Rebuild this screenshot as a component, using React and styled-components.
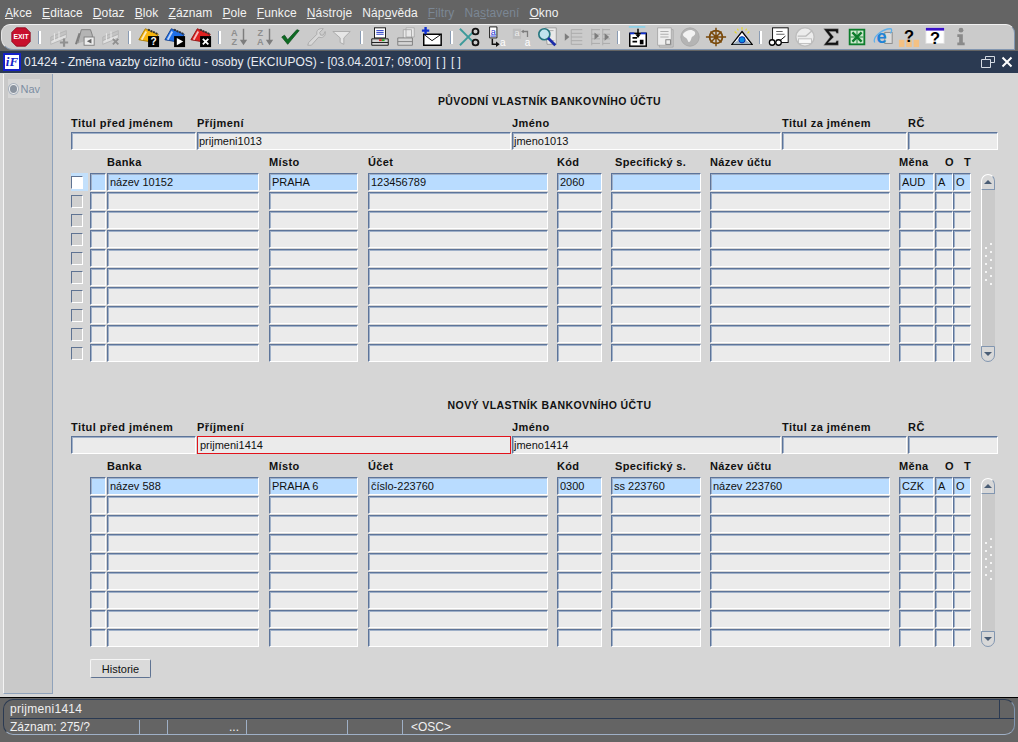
import React from "react";
import styled, { createGlobalStyle } from "styled-components";

const GlobalStyle = createGlobalStyle`
  html, body { margin: 0; padding: 0; height: 100%; overflow: hidden; background: #646464; }
  body { font-family: "Liberation Sans", Arial, sans-serif; font-size: 11px; color: #111; }
  * { box-sizing: border-box; }
`;

const GREY = "#a9a9a9";
const GREY_D = "#7d7d7d";

const Svg = ({ children }) => (
  <svg width="22" height="22" viewBox="0 0 24 24">
    {children}
  </svg>
);

const Exit = () => (
  <Svg>
    <polygon points="7,2 17,2 22,7 22,17 17,22 7,22 2,17 2,7" fill="#c8102e" stroke="#8d0b20" />
    <text x="12" y="14.5" fontSize="7.5" fontWeight="700" fill="#fff" textAnchor="middle" fontFamily="Liberation Sans">EXIT</text>
  </Svg>
);

const RowIcon = ({ mark }) => (
  <Svg>
    <path d="M3 12 L20 5 L20 9 L3 16 Z" fill="#c4c4c4" stroke="#b4b4b4" />
    <path d="M3 16 L20 9 L20 13 L3 20 Z" fill="#e0e0e0" stroke="#b4b4b4" />
    <path d="M7 8v8M12 6v8" stroke="#eee" />
    {mark === "plus" ? (
      <path d="M13 18h9M17.5 13.5v9" stroke="#909090" strokeWidth="2.4" />
    ) : (
      <path d="M14 14l6 6M20 14l-6 6" stroke="#909090" strokeWidth="2" />
    )}
  </Svg>
);

const FolderGrey = () => (
  <Svg>
    <path d="M4 19 L8 4 L18 4 L20 10 L20 14" fill="#b4b4b4" stroke={GREY_D} />
    <path d="M2 20 L6 8" stroke={GREY_D} strokeWidth="2" />
    <rect x="11" y="12" width="11" height="9" fill="#ededed" stroke={GREY_D} />
    <path d="M19 14 L14 16.5 L19 19 Z" fill="#666" />
  </Svg>
);

const CardIcon = ({ color, dark, children }) => (
  <Svg>
    <path d="M1 15 L8 3 L22 9 L18 18 Z" fill={color} stroke={dark} />
    <path d="M4 15 L9 6" stroke="#fff" strokeOpacity=".7" strokeWidth="2" />
    <path d="M11 4 L22 9" stroke="#333" strokeWidth="2" strokeDasharray="2 1" />
    <rect x="11" y="11" width="12" height="12" fill="#000" />
    {children}
  </Svg>
);

const SortIcon = ({ top, bottom }) => (
  <Svg>
    <text x="8" y="11" fontSize="10" fill="#8f8f8f" fontWeight="700" textAnchor="middle" fontFamily="Liberation Sans">{top}</text>
    <text x="8" y="21" fontSize="10" fill="#8f8f8f" fontWeight="700" textAnchor="middle" fontFamily="Liberation Sans">{bottom}</text>
    <path d="M18 3v14" stroke="#7d7d7d" strokeWidth="1.6" />
    <path d="M14 15h8l-4 6z" fill="#7d7d7d" />
  </Svg>
);

const Check = () => (
  <Svg>
    <path d="M3 12 L9.5 20 L22 5 L19.5 4 L9.5 15 L6 10 Z" fill="#0c6b22" stroke="#0a4c18" strokeWidth=".8" />
  </Svg>
);

const Wrench = () => (
  <Svg>
    <path d="M3 21 L4 18 L13 9 C12 5 15 2 20 3 L16 7 L17 10 L20 10 L22 6 C23 11 19 14 15 12 L7 21 Z" fill="#d8d8d8" stroke={GREY} />
  </Svg>
);

const Funnel = () => (
  <Svg>
    <path d="M2 6 H21 L14 13 V20 L10 18 V13 Z" fill="#e6e6e6" stroke={GREY} />
  </Svg>
);

const Printer = () => (
  <Svg>
    <rect x="6" y="2" width="12" height="11" fill="#fff" stroke="#111" />
    <path d="M8 5h8M8 7h8M8 9h8" stroke="#1b2fbf" />
    <path d="M3 14 H21 V21 H3 Z" fill="#d5d5d5" stroke="#111" />
    <path d="M3 18 H21" stroke="#111" />
    <path d="M11 15.5h3" stroke="#d22" strokeWidth="2" />
    <path d="M14 15.5h3" stroke="#2a2" strokeWidth="2" />
  </Svg>
);

const PrinterGrey = () => (
  <Svg>
    <path d="M12 2h9v10h-9z M9 4h9v10H9z" fill="#e8e8e8" stroke={GREY} />
    <path d="M3 13 H19 V21 H3 Z" fill="#d5d5d5" stroke={GREY_D} />
    <path d="M3 17 H19" stroke={GREY_D} />
  </Svg>
);

const Mail = () => (
  <Svg>
    <rect x="3" y="9" width="19" height="12" fill="#fff" stroke="#000" strokeWidth="1.6" />
    <path d="M3 9 L12 16 L22 9" fill="none" stroke="#000" />
    <path d="M1 5h8M5 1v8" stroke="#1030d0" strokeWidth="2.6" />
  </Svg>
);

const Scissors = () => (
  <Svg>
    <path d="M1 3 L15 17" stroke="#3c9a9a" strokeWidth="2" />
    <path d="M1 21 L15 7" stroke="#3c9a9a" strokeWidth="2" />
    <circle cx="18" cy="6" r="3.2" fill="none" stroke="#111" strokeWidth="2" />
    <circle cx="18" cy="18" r="3.2" fill="none" stroke="#111" strokeWidth="2" />
  </Svg>
);

const CopyIcon = () => (
  <Svg>
    <path d="M5 1h8v12H5z" fill="#fff" stroke="#111" />
    <text x="9" y="10" fontSize="10" fill="#1a2fd0" textAnchor="middle" fontFamily="Liberation Sans">a</text>
    <path d="M6 11h6" stroke="#1a2fd0" />
    <path d="M8 14v6h5" fill="none" stroke="#111" strokeWidth="1.6" />
    <path d="M12 17l4 3-4 3z" fill="#111" />
    <text x="19.5" y="22" fontSize="11" fill="#fff" textAnchor="middle" fontFamily="Liberation Sans">a</text>
  </Svg>
);

const PasteGrey = () => (
  <Svg>
    <rect x="2" y="3" width="9" height="11" fill="#bdbdbd" />
    <text x="6.5" y="11" fontSize="10" fill="#eee" textAnchor="middle" fontFamily="Liberation Sans">a</text>
    <path d="M12 6h6v6" fill="none" stroke={GREY_D} strokeWidth="1.4" />
    <path d="M11 6l3-2v4z" fill={GREY_D} />
    <text x="18" y="22" fontSize="11" fill="#fff" textAnchor="middle" fontFamily="Liberation Sans">a</text>
  </Svg>
);

const FindIcon = () => (
  <Svg>
    <path d="M9 2 H21 V20 H11 Z" fill="#e9e9e9" stroke="#999" />
    <path d="M12 5h6M14 16h5" stroke="#aaa" />
    <circle cx="8" cy="9" r="6" fill="#bfe3ee" stroke="#26767f" strokeWidth="1.8" />
    <path d="M12 13 L20 21" stroke="#1b2ca8" strokeWidth="3" />
  </Svg>
);

const ListIn = () => (
  <Svg>
    <path d="M9 4v16M9 4h12M9 8h12M9 12h12M9 16h12M9 20h12" stroke={GREY} fill="none" />
    <path d="M2 8l5 4-5 4z" fill={GREY_D} />
  </Svg>
);

const ListCols = () => (
  <Svg>
    <path d="M3 3v18M15 3v18M3 4h9M3 9h9M3 14h9M3 19h9M15 4h8M15 9h8M15 14h8M15 19h8" stroke={GREY} fill="none" />
    <path d="M6 7l5 4-5 4zM17 8l5 4-5 4z" fill={GREY_D} />
  </Svg>
);

const FormIcon = () => (
  <Svg>
    <path d="M2 1h18" stroke="#8fd0e6" strokeWidth="2" />
    <rect x="3" y="8" width="18" height="14" fill="#fff" stroke="#000" strokeWidth="1.6" />
    <path d="M3 8h5M15 8h6" stroke="#1030d0" strokeWidth="2" />
    <path d="M6 13h5M6 17h5" stroke="#000" strokeWidth="2" />
    <rect x="14" y="15" width="4" height="5" fill="#000" />
    <path d="M12 3v8" stroke="#000" strokeWidth="1.6" />
    <path d="M9 9h6l-3 4z" fill="#000" />
  </Svg>
);

const DocGrey = () => (
  <Svg>
    <path d="M5 2 H20 V21 H5 Z" fill="#eee" stroke={GREY} />
    <path d="M8 6h9M8 9h9M8 12h9" stroke={GREY} />
    <path d="M20 4h2v19H7v-2" fill="none" stroke={GREY} />
    <rect x="14" y="15" width="5" height="5" fill="none" stroke={GREY_D} />
  </Svg>
);

const Globe = () => (
  <Svg>
    <circle cx="12" cy="12" r="10" fill="#b4b4b4" stroke="#a8a8a8" />
    <path d="M5 8 C8 4 14 3 17 6 C19 9 16 11 14 12 C13 15 12 19 10 17 C9 14 8 13 6 12 C4 11 4 9 5 8 Z" fill="#f2f2f2" />
  </Svg>
);

const Helm = () => (
  <Svg>
    <circle cx="12" cy="12" r="7" fill="none" stroke="#7a4a0c" strokeWidth="2" />
    <circle cx="12" cy="12" r="2.4" fill="#7a4a0c" />
    <path d="M12 2v20M1 12h22M6 6l12 12M18 6L6 18" stroke="#7a4a0c" strokeWidth="1.6" />
  </Svg>
);

const Eye = () => (
  <Svg>
    <path d="M12 6 L23 20 H1 Z" fill="#fff" stroke="#000" strokeWidth="1.4" />
    <path d="M2 20 L12 12 L22 20 Z" fill="#9fb0c0" />
    <circle cx="12" cy="15" r="3.4" fill="#0a8ae0" stroke="#0020a0" />
    <path d="M4 6l2 2M20 6l-2 2M12 1v3M7 3l1 2M17 3l-1 2" stroke="#e8d820" strokeWidth="1.2" />
  </Svg>
);

const Glasses = () => (
  <Svg>
    <rect x="5" y="2" width="17" height="16" fill="#fff" stroke="#000" />
    <path d="M9 6h7M9 9h9" stroke="#555" />
    <path d="M13 16l6-5" stroke="#000" />
    <circle cx="4.5" cy="18" r="3" fill="#fff" stroke="#000" strokeWidth="1.4" />
    <circle cx="11.5" cy="18" r="3" fill="#fff" stroke="#000" strokeWidth="1.4" />
  </Svg>
);

const Gauge = () => (
  <Svg>
    <circle cx="12" cy="12" r="10" fill="#ececec" stroke="#bdbdbd" strokeWidth="1.6" />
    <path d="M4 11h9l7-6" stroke="#bbb" strokeWidth="1.4" fill="none" />
    <rect x="5" y="14" width="14" height="5" fill="#f8f8f8" stroke="#bbb" />
  </Svg>
);

const Sigma = () => (
  <Svg>
    <path d="M4 3 H20 V8 H18 L17 6 H10 L15 12 L9 18 H17 L18 16 H20 V21 H4 L11 12 Z" fill="#111" stroke="#999" strokeWidth=".5" />
  </Svg>
);

const Excel = () => (
  <Svg>
    <rect x="3" y="3" width="18" height="18" fill="#0d7d2c" />
    <rect x="5" y="5" width="14" height="14" fill="#cfe9cf" />
    <path d="M7 7 L17 17 M17 7 L7 17" stroke="#0d7d2c" strokeWidth="2.6" />
    <path d="M5 12h14M12 5v14" stroke="#0d7d2c" />
  </Svg>
);

const Explorer = () => (
  <Svg>
    <rect x="14" y="7" width="8" height="12" fill="#dcdcdc" stroke="#888" />
    <text x="10.5" y="19" fontSize="20" fontWeight="700" fill="#1f83d8" textAnchor="middle" fontFamily="Liberation Sans">e</text>
    <path d="M3 18 C0 12 12 3 20 3 C22 3 22 6 20 8" fill="none" stroke="#5fb0ea" strokeWidth="1.4" />
  </Svg>
);

const HelpBooks = () => (
  <Svg>
    <rect x="1" y="15" width="6" height="8" fill="#f4c183" />
    <rect x="9" y="15" width="6" height="8" fill="#f4c183" />
    <rect x="17" y="15" width="6" height="8" fill="#f4c183" />
    <text x="12" y="17" fontSize="18" fontWeight="700" fill="#000" textAnchor="middle" fontFamily="Liberation Sans">?</text>
  </Svg>
);

const HelpWin = () => (
  <Svg>
    <rect x="2" y="2" width="20" height="17" fill="#fff" stroke="#ddd" />
    <rect x="2" y="2" width="20" height="3" fill="#3a10c8" />
    <text x="12" y="20" fontSize="18" fontWeight="700" fill="#000" textAnchor="middle" fontFamily="Liberation Sans">?</text>
  </Svg>
);

const Info = () => (
  <Svg>
    <circle cx="12" cy="4.5" r="2.6" fill="#8a8a8a" />
    <path d="M8 9h6v9h2v3H8v-3h2v-6H8z" fill="#8a8a8a" />
  </Svg>
);

const TOOLBAR = [
  <Exit />, "|",
  <RowIcon mark="plus" />, <FolderGrey />, <RowIcon mark="x" />, "|",
  <CardIcon color="#f6b40e" dark="#a87a00"><text x="17" y="21" fontSize="11" fontWeight="700" fill="#fff" textAnchor="middle" fontFamily="Liberation Sans">?</text></CardIcon>,
  <CardIcon color="#1f6fe8" dark="#10408e"><path d="M14 13l7 4-7 4z" fill="#fff" /></CardIcon>,
  <CardIcon color="#e02020" dark="#8e1010"><path d="M14 14l6 6M20 14l-6 6" stroke="#fff" strokeWidth="2" /></CardIcon>, "|",
  <SortIcon top="A" bottom="Z" />, <SortIcon top="Z" bottom="A" />, <Check />, <Wrench />, <Funnel />, "|",
  <Printer />, <PrinterGrey />, <Mail />, "|",
  <Scissors />, <CopyIcon />, <PasteGrey />, <FindIcon />, <ListIn />, <ListCols />, "|",
  <FormIcon />, <DocGrey />, <Globe />, <Helm />, <Eye />, "|",
  <Glasses />, <Gauge />, <Sigma />, <Excel />, <Explorer />, <HelpBooks />, <HelpWin />, <Info />,
];

const MENU = [
  { pre: "", u: "A", post: "kce" },
  { pre: "", u: "E", post: "ditace" },
  { pre: "", u: "D", post: "otaz" },
  { pre: "", u: "B", post: "lok" },
  { pre: "", u: "Z", post: "áznam" },
  { pre: "", u: "P", post: "ole" },
  { pre: "", u: "F", post: "unkce" },
  { pre: "", u: "N", post: "ástroje" },
  { pre: "Náp", u: "o", post: "věda" },
  { pre: "", u: "F", post: "iltry", off: true },
  { pre: "Na", u: "s", post: "tavení", off: true },
  { pre: "", u: "O", post: "kno" },
];

const COLUMNS = [
  { key: "ind", w: 16, gap: 1 },
  { key: "banka", label: "Banka", w: 152, gap: 10 },
  { key: "misto", label: "Místo", w: 89, gap: 10 },
  { key: "ucet", label: "Účet", w: 180, gap: 9 },
  { key: "kod", label: "Kód", w: 45, gap: 9 },
  { key: "spec", label: "Specifický s.", w: 90, gap: 9, lx: 4 },
  { key: "nazev", label: "Název účtu", w: 180, gap: 9 },
  { key: "mena", label: "Měna", w: 35, gap: 1 },
  { key: "o", label: "O", w: 18, gap: 0, lx: 10 },
  { key: "t", label: "T", w: 18, gap: 0, lx: 11 },
];

const OWNER_COLS = [
  { label: "Titul před jménem", w: 125, gap: 1 },
  { label: "Příjmení", w: 314, gap: 1, name: "surname" },
  { label: "Jméno", w: 269, gap: 1, name: "first" },
  { label: "Titul za jménem", w: 125, gap: 1 },
  { label: "RČ", w: 90, gap: 0 },
];

const BLOCKS = [
  {
    title: "PŮVODNÍ VLASTNÍK BANKOVNÍHO ÚČTU",
    surname: "prijmeni1013",
    first: "jmeno1013",
    rows: 10,
    checks: true,
    record: { banka: "název 10152", misto: "PRAHA", ucet: "123456789", kod: "2060", mena: "AUD", o: "A", t: "O" },
  },
  {
    title: "NOVÝ VLASTNÍK BANKOVNÍHO ÚČTU",
    surname: "prijmeni1414",
    first: "jmeno1414",
    rows: 9,
    focus: true,
    record: { banka: "název 588", misto: "PRAHA 6", ucet: "číslo-223760", kod: "0300", spec: "ss 223760", nazev: "název 223760", mena: "CZK", o: "A", t: "O" },
  },
];

const STATUS_CELLS = [
  { w: 130, text: "Záznam: 275/?" },
  { w: 28 },
  { w: 79, text: "...", right: true },
  { w: 101 },
  { w: 55 },
  { w: 200, text: "<OSC>", pad: 8 },
];

function Block({ data }) {
  return (
    <Section>
      <Heading>{data.title}</Heading>
      <LabelRow>
        {OWNER_COLS.map((c) => (
          <Label key={c.label} $w={c.w} $gap={c.gap}>{c.label}</Label>
        ))}
      </LabelRow>
      <FieldRow>
        {OWNER_COLS.map((c) => (
          <Field
            key={c.label}
            $w={c.w}
            $gap={c.gap}
            $focus={data.focus && c.name === "surname"}
          >
            {data[c.name]}
          </Field>
        ))}
      </FieldRow>
      <Table>
        <Rows>
          <ColumnHead>
            <CheckSlot />
            {COLUMNS.map((c) => (
              <ColLabel key={c.key} $w={c.w} $gap={c.gap} $lx={c.lx}>{c.label}</ColLabel>
            ))}
          </ColumnHead>
          {Array.from({ length: data.rows }, (_, i) => (
            <Row key={i}>
              <CheckSlot $on={data.checks && i === 0}>
                {data.checks && <CheckBox $on={i === 0} />}
              </CheckSlot>
              {COLUMNS.map((c) => (
                <Cell key={c.key} $w={c.w} $gap={c.gap} $on={i === 0}>
                  {i === 0 ? data.record[c.key] : ""}
                </Cell>
              ))}
            </Row>
          ))}
        </Rows>
        <Scroll>
          <ScrollBtn $up>
            <svg width="8" height="4" viewBox="0 0 8 4"><path d="M4 0l4 4H0z" fill="#4a5d75" /></svg>
          </ScrollBtn>
          <Track>
            <Grip>
              {Array.from({ length: 12 }, (_, i) => <Dot key={i} />)}
            </Grip>
          </Track>
          <ScrollBtn>
            <svg width="8" height="4" viewBox="0 0 8 4"><path d="M0 0h8L4 4z" fill="#4a5d75" /></svg>
          </ScrollBtn>
        </Scroll>
      </Table>
    </Section>
  );
}

export default function App() {
  return (
    <Page>
      <GlobalStyle />
      <MenuBar>
        {MENU.map((m) => (
          <MenuItem key={m.pre + m.u + m.post} $off={m.off}>
            {m.pre}<u>{m.u}</u>{m.post}
          </MenuItem>
        ))}
      </MenuBar>
      <Toolbar>
        {TOOLBAR.map((t, i) =>
          t === "|" ? <Sep key={i} /> : <ToolBtn key={i}>{t}</ToolBtn>
        )}
      </Toolbar>
      <Win>
        <TitleBar>
          <Logo>iF</Logo>
          <TitleText>
            01424 - Změna vazby cizího účtu - osoby (EKCIUPOS) - [03.04.2017; 09:00]
            <Brackets>[ ]</Brackets>
            <Brackets>[ ]</Brackets>
          </TitleText>
          <WinBtns>
            <svg width="14" height="12" viewBox="0 0 14 12">
              <path d="M4.5 3V.5h9v6H10M.5 3.5h9v8h-9z" fill="none" stroke="#d5dbe3" />
            </svg>
            <svg width="12" height="12" viewBox="0 0 12 12">
              <path d="M1.5 1.5l9 9M10.5 1.5l-9 9" stroke="#fff" strokeWidth="2" />
            </svg>
          </WinBtns>
        </TitleBar>
        <Body>
          <Side>
            <NavItem>
              <Radio />
              Nav
            </NavItem>
          </Side>
          <Main>
            {BLOCKS.map((b) => <Block key={b.title} data={b} />)}
            <Button>Historie</Button>
          </Main>
        </Body>
      </Win>
      <Status>
        <StatusInner>
          <MessageLine>
            <MessageText>prijmeni1414</MessageText>
            <MessageEnd />
          </MessageLine>
          <StatusLine>
            {STATUS_CELLS.map((c, i) => (
              <StatusCell key={i} $w={c.w} $right={c.right} $pad={c.pad}>{c.text}</StatusCell>
            ))}
          </StatusLine>
        </StatusInner>
      </Status>
    </Page>
  );
}

const Page = styled.div`
  width: 1018px;
  height: 742px;
  display: flex;
  flex-direction: column;
  background: #646464;
  overflow: hidden;
`;

const MenuBar = styled.div`
  height: 24px;
  flex: none;
  display: flex;
  align-items: center;
  gap: 10px;
  padding: 1px 0 0 5px;
  background: #646464;
`;

const MenuItem = styled.span`
  font-size: 12px;
  letter-spacing: 0.1px;
  color: ${(p) => (p.$off ? "#7b8794" : "#f2f2f2")};
`;

const Toolbar = styled.div`
  height: 26px;
  flex: none;
  margin: 0 3px 1px 1px;
  display: flex;
  align-items: center;
  padding-left: 6px;
  background: #cbcbcb;
  border-top: 1px solid #f0f0f0;
  border-bottom: 1px solid #8296b0;
  border-right: 1px solid #8296b0;
  border-left: 1px solid #e4e4e4;
  border-radius: 9px 9px 0 12px;
`;

const ToolBtn = styled.div`
  width: 26px;
  height: 24px;
  flex: none;
  display: flex;
  align-items: center;
  justify-content: center;
`;

const Sep = styled.div`
  width: 3px;
  height: 13px;
  margin: 0 4.4px;
  flex: none;
  background: #fff;
  border-left: 1px solid #8a9cb4;
`;

const Win = styled.div`
  height: 647px;
  flex: none;
  display: flex;
  flex-direction: column;
`;

const TitleBar = styled.div`
  height: 22px;
  flex: none;
  display: flex;
  align-items: center;
  background: #2b3a52;
  padding: 0 5px 0 3px;
`;

const Logo = styled.div`
  width: 18px;
  height: 18px;
  flex: none;
  background: #fff;
  border: 2px solid #1420c8;
  color: #1420c8;
  font: italic 700 13px/14px "Liberation Serif", serif;
  text-align: center;
`;

const TitleText = styled.div`
  flex: 1;
  margin-left: 3px;
  font-size: 12px;
  color: #e8ecf2;
  white-space: nowrap;
`;

const Brackets = styled.span`
  margin-left: 5px;
`;

const WinBtns = styled.div`
  display: flex;
  align-items: center;
  gap: 6px;
`;

const Body = styled.div`
  flex: 1;
  min-height: 0;
  display: flex;
  background: #d6d6d6;
  padding: 1px 0 3px 3px;
  border-bottom: 1px solid #000;
`;

const Side = styled.div`
  width: 50px;
  flex: none;
  padding: 5px 0 0 4px;
  background: #c9c9c9;
  border-left: 1px solid #f4f4f4;
  border-right: 1px solid #8fa2ba;
  border-bottom: 1px solid #8fa2ba;
`;

const NavItem = styled.div`
  width: 32px;
  height: 19px;
  display: flex;
  align-items: center;
  gap: 2px;
  background: #d6d6d6;
  color: #7d8ea3;
  font-size: 11px;
`;

const Radio = styled.span`
  width: 10px;
  height: 10px;
  border-radius: 50%;
  background: #8b94a0;
  border: 1px solid #f2f2f2;
  box-shadow: 0 0 0 1px #a8b2bf;
  margin-left: 1px;
`;

const Main = styled.div`
  flex: 1;
  min-width: 0;
  padding: 19px 0 0 18px;
  display: flex;
  flex-direction: column;
`;

const Section = styled.section`
  &:first-child {
    margin-bottom: 34px;
  }
`;

const Heading = styled.div`
  width: 927px;
  height: 16px;
  padding-left: 30px;
  text-align: center;
  font-weight: 700;
  font-size: 10.5px;
  letter-spacing: 0.41px;
  line-height: 16px;
  color: #111;
`;

const LabelRow = styled.div`
  display: flex;
  margin-top: 6px;
  height: 16px;
  align-items: center;
`;

const Label = styled.div`
  width: ${(p) => p.$w}px;
  margin-right: ${(p) => p.$gap}px;
  flex: none;
  font-weight: 700;
  font-size: 11px;
  letter-spacing: 0.45px;
  color: #111;
  white-space: nowrap;
`;

const FieldRow = styled.div`
  display: flex;
  margin-top: 1px;
`;

const Field = styled.div`
  width: ${(p) => p.$w}px;
  height: 18px;
  margin-right: ${(p) => p.$gap}px;
  flex: none;
  padding: 0 1px;
  font-size: 11px;
  line-height: 16px;
  background: ${(p) => (p.$on ? "#b9dcff" : "#ebebeb")};
  border: 1px solid #fff;
  border-top: 1px solid #5d7499;
  border-left: 1px solid #5d7499;
  box-shadow: inset 1px 1px 0 #9fb0c8;
  white-space: nowrap;
  overflow: hidden;
  ${(p) => p.$focus && "border: 1px solid #e2121b; box-shadow: none; padding-left: 2px;"}
`;

const Cell = styled(Field)`
  margin-bottom: 1px;
  padding-left: 2px;
  line-height: 17px;
`;

const Table = styled.div`
  display: flex;
  margin-top: 4px;
`;

const Rows = styled.div`
  display: flex;
  flex-direction: column;
`;

const ColumnHead = styled.div`
  display: flex;
  height: 19px;
  align-items: flex-start;
`;

const ColLabel = styled(Label)`
  height: 19px;
  line-height: 17px;
  letter-spacing: 0.35px;
  padding-left: ${(p) => p.$lx || 0}px;
`;

const Row = styled.div`
  display: flex;
`;

const CheckSlot = styled.div`
  width: 19px;
  height: 18px;
  flex: none;
  padding: 1px 0 0;
  background: ${(p) => (p.$on ? "linear-gradient(90deg, #c3e0fb 17px, transparent 17px)" : "transparent")};
`;

const CheckBox = styled.div`
  width: 12px;
  height: 13px;
  margin-top: 2px;
  background: ${(p) => (p.$on ? "#fff" : "#d0d0d0")};
  border: 1px solid #fff;
  border-top: 1px solid #5f7392;
  border-left: 1px solid #5f7392;
`;

const Scroll = styled.div`
  width: 14px;
  margin: 20px 0 0 10px;
  display: flex;
  flex-direction: column;
  align-self: stretch;
  padding-bottom: 1px;
`;

const ScrollBtn = styled.div`
  height: 16px;
  flex: none;
  display: flex;
  align-items: center;
  justify-content: center;
  background: #d8d8d8;
  border: 1px solid #8296b0;
  border-color: ${(p) => (p.$up ? "#fff #8296b0 #8296b0 #fff" : "#8296b0")};
  border-radius: ${(p) => (p.$up ? "7px 7px 0 0" : "0 0 7px 7px")};
`;

const Track = styled.div`
  flex: 1;
  display: flex;
  align-items: center;
  justify-content: center;
  background: #cacaca;
  border-left: 1px solid #fff;
`;

const Grip = styled.div`
  display: grid;
  grid-template-columns: 2px 2px;
  column-gap: 3px;
  row-gap: 6px;
  transform: translateY(-4px);
`;

const Dot = styled.span`
  width: 2px;
  height: 2px;
  background: #f4f4f4;
  &:nth-child(odd) {
    transform: translateY(4px);
  }
  &:nth-child(11) {
    visibility: hidden;
  }
`;

const Button = styled.button`
  width: 61px;
  height: 19px;
  margin: 11px 0 0 19px;
  padding: 0;
  flex: none;
  font: 11px "Liberation Sans", Arial, sans-serif;
  color: #111;
  background: #dadada;
  border: 1px solid #5f7392;
  border-top-color: #f6f6f6;
  border-left-color: #f6f6f6;
  border-radius: 2px;
`;

const Status = styled.div`
  flex: 1;
  min-height: 0;
  padding: 1px 3px 7px 3px;
`;

const StatusInner = styled.div`
  height: 100%;
  border: 1px solid #2b3a52;
  border-right-color: #8296b0;
  border-bottom: 1px solid #9fb0c6;
  border-radius: 10px;
  padding-left: 6px;
  color: #f0f0f0;
  font-size: 12px;
`;

const MessageLine = styled.div`
  height: 19px;
  display: flex;
  align-items: center;
  border-bottom: 1px solid #2b3a52;
`;

const MessageText = styled.span`
  letter-spacing: 0.3px;
`;

const MessageEnd = styled.span`
  width: 1px;
  height: 18px;
  margin-left: auto;
  margin-right: 14px;
  background: #2b3a52;
`;

const StatusLine = styled.div`
  height: 17px;
  display: flex;
  align-items: center;
`;

const StatusCell = styled.div`
  width: ${(p) => p.$w}px;
  height: 15px;
  line-height: 15px;
  flex: none;
  white-space: nowrap;
  padding-left: ${(p) => p.$pad || 0}px;
  padding-right: ${(p) => (p.$right ? 7 : 0)}px;
  text-align: ${(p) => (p.$right ? "right" : "left")};
  border-right: 1px solid #9fb0c6;
  &:last-child {
    border-right: 0;
  }
`;
